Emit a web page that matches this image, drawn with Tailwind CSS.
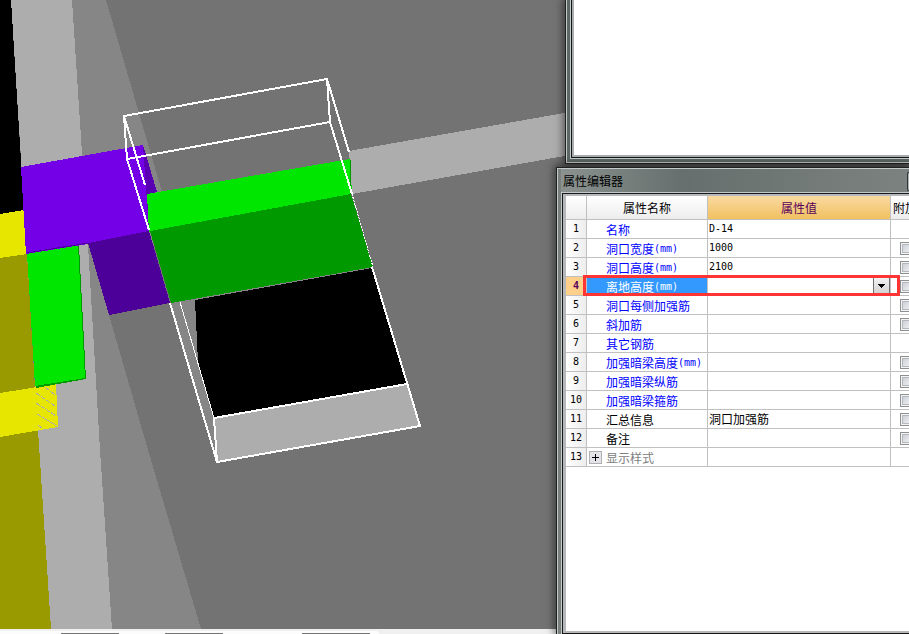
<!DOCTYPE html>
<html lang="zh-CN">
<head>
  <meta charset="UTF-8">
  <title>属性编辑器</title>
  <script src="https://cdn.jsdelivr.net/npm/@tailwindcss/browser@4"></script>
</head>
<body class="relative flex h-screen flex-col overflow-hidden bg-[#737373] font-['Noto_Sans_CJK_SC',sans-serif] text-xs text-black">

  <!-- 3D view -->
  <main class="min-h-0 flex-1">
    <svg class="block h-full w-full" viewBox="0 0 909 629" preserveAspectRatio="xMinYMin slice" shape-rendering="crispEdges" role="img" aria-label="3D">
      <rect width="909" height="629" fill="#737373"/>
      <!-- floor and walls -->
      <polygon points="0,0 11,0 27,258 0,258" fill="#000000"/>
      <polygon points="11,0 72,0 88,245 100,450 112,629 51,629 38,430" fill="#adadad"/>
      <polygon points="72,0 106,0 162,192 157,240 109,315 148,450 201,629 112,629 100,450 88,245" fill="#868686"/>
      <polygon points="349,151 570,112 570,155 352,194" fill="#adadad"/>
      <!-- left beams -->
      <polygon points="0,214 24,210 27,254 0,258" fill="#e6e600"/>
      <polygon points="0,258 27,254 35,388 0,393" fill="#999900"/>
      <polygon points="0,437 38,430 51,629 0,629" fill="#999900"/>
      <polygon points="0,393 56,384 58,427 0,437" fill="#e6e600"/>
      <g stroke="#adadad" stroke-width="1" stroke-dasharray="5 1">
        <path d="M45 387L55 395M36 393L55 406M36 403L56 416M37 414L57 426M38 425L43 429"/>
      </g>
      <polygon points="27,253 79,245 86,379 36,388" fill="#009900"/>
      <polygon points="27,253 78,245 85,378 35,386" fill="#00e600"/>
      <!-- column -->
      <polygon points="143,145 157,192 148,194 149,232 140,200" fill="#5900b3"/>
      <polygon points="21,167 143,145 149,231 88,244 26,254" fill="#7300e6"/>
      <path d="M27 253L88 243" stroke="#4c0099"/>
      <polygon points="88,243 149,231 170,303 109,315" fill="#4c0099"/>
      <!-- beam above the opening -->
      <polygon points="147,194 350,159 352,194 149,232" fill="#00e600"/>
      <path d="M350.500 160V194" stroke="#009900"/>
      <polygon points="150,231 351,194 373,267 171,303" fill="#009900"/>
      <!-- opening -->
      <polygon points="171,303 373,267 214,418 217,462" fill="#868686"/>
      <polygon points="195,300 372,268 407,384 214,418 198,362" fill="#000000"/>
      <polygon points="214,418 407,384 420,426 217,462" fill="#adadad"/>
      <g fill="none" stroke="#ffffff" stroke-width="2">
        <path d="M124 116L327 79L330 122L127 159Z"/>
        <path d="M327 79L349 152M330 122L352 194M124 116L145 185M127 159L149 230"/>
        <path d="M170 303L217 462L420 426L372 267M407 384L214 418L217 462"/>
      </g>
      <path d="M180 302L214 418" stroke="#ffffff"/>
      <path d="M352 194L373 267" stroke="#ffffff" stroke-dasharray="2 1"/>
    </svg>
  </main>

  <!-- bottom tabs -->
  <footer class="h-[5px] shrink-0 bg-[#f0f0f0] pt-0.5">
    <div class="flex h-[3px] w-[379px] items-end rounded-tr bg-[#fcfcfc] pl-[61px]">
      <span class="h-px w-[58px] bg-[#737373]"></span>
      <span class="ml-[46px] h-px w-[58px] bg-[#737373]"></span>
      <span class="ml-[79px] h-px w-[68px] bg-[#737373]"></span>
    </div>
  </footer>

  <!-- upper window -->
  <section class="absolute top-0 right-0 left-[565px] h-[164px] border-b border-l border-[#202020] shadow-[0_0_8px_2px_#00000080]">
    <div class="h-full border-b border-l border-[#c4c9c9] bg-[#5d6764] pb-[3px] pl-[3px]">
      <div class="h-full border-b border-l border-[#c4c9c9]">
        <div class="h-full border-b border-l border-[#181818]">
          <div class="h-full border-b-2 border-l-2 border-[#a9adad] bg-white"></div>
        </div>
      </div>
    </div>
  </section>

  <!-- property editor -->
  <section class="absolute top-[167px] right-0 bottom-0 left-[556px] border-t border-l border-[#202020] shadow-[0_0_8px_2px_#00000080]">
    <div class="flex h-full flex-col border-t border-l border-[#c4c9c9] bg-[#5d6764] bg-linear-to-r from-[#79807e] to-[#737a78] pl-[3px]">
      <header class="flex h-[23px] shrink-0 items-center justify-between bg-linear-to-r from-[#8b9290] via-[#666f6d] via-35% to-[#7c8280] pl-0.5">
        <h1 class="leading-6">属性编辑器</h1>
        <button type="button" aria-label="关闭" class="mt-0.5 h-[19px] w-0.5 rounded-l-sm border-y border-l border-[#303434] bg-[#b0b5b5]"></button>
      </header>
      <div class="min-h-0 flex-1 border-t border-l border-[#c4c9c9]">
        <div class="h-full border-t border-b border-l border-[#181818]">
          <div class="h-full overflow-hidden border-t-2 border-b-2 border-l-3 border-[#b4b8ba] bg-white">
            <table class="w-[364px] table-fixed border-separate border-spacing-0">
              <colgroup>
                <col class="w-[21px]">
                <col class="w-[121px]">
                <col class="w-[183px]">
                <col>
              </colgroup>
              <thead>
                <tr class="h-6 leading-5">
                  <th class="border-r border-b border-[#c0c0c0] bg-linear-to-b from-white to-[#ededed] p-0"></th>
                  <th class="border-r border-b border-[#c0c0c0] bg-linear-to-b from-white to-[#ededed] p-0 font-normal">属性名称</th>
                  <th class="border-r border-b border-[#c0c0c0] bg-linear-to-b from-[#f9d99f] to-[#f1c15f] p-0 font-normal text-[#5a005a]">属性值</th>
                  <th class="border-b border-[#c0c0c0] bg-linear-to-b from-white to-[#ededed] p-0 pl-0.5 text-left font-normal">附加</th>
                </tr>
              </thead>
              <tbody id="rows"></tbody>
            </table>
          </div>
        </div>
      </div>
    </div>
  </section>

  <!-- highlight round the selected row -->
  <div class="pointer-events-none absolute top-[275px] left-[583px] h-[21px] w-[317px] border-3 border-[#ff3434]"></div>

  <script>
    const rows = [
      { name: '名称', value: 'D-14', blue: true },
      { name: '洞口宽度', unit: '(mm)', value: '1000', blue: true, check: true },
      { name: '洞口高度', unit: '(mm)', value: '2100', blue: true, check: true },
      { name: '离地高度', unit: '(mm)', selected: true, check: true },
      { name: '洞口每侧加强筋', blue: true, check: true },
      { name: '斜加筋', blue: true, check: true },
      { name: '其它钢筋', blue: true },
      { name: '加强暗梁高度', unit: '(mm)', blue: true, check: true },
      { name: '加强暗梁纵筋', blue: true, check: true },
      { name: '加强暗梁箍筋', blue: true, check: true },
      { name: '汇总信息', text: '洞口加强筋', check: true },
      { name: '备注', check: true },
      { name: '显示样式', group: true }
    ];

    const select = `
      <div class="relative h-[18px]">
        <select aria-label="离地高度(mm)" class="block h-full w-full appearance-none bg-white"><option></option></select>
        <span class="pointer-events-none absolute top-0 right-0 flex h-full w-[17px] items-center justify-center border-x border-[#707070] bg-linear-to-b from-[#f4f4f4] to-[#cfcfcf]">
          <svg class="h-1 w-[7px]" viewBox="0 0 7 4" shape-rendering="crispEdges"><path d="M0 0H7V1H6V2H5V3H4V4H3V3H2V2H1V1H0Z"/></svg>
        </span>
      </div>`;

    const plus = `
      <button type="button" aria-label="展开" class="flex size-[13px] items-center justify-center border border-[#b0b0b0] bg-[#e4e4e8]">
        <svg class="size-[7px]" viewBox="0 0 7 7" shape-rendering="crispEdges"><path d="M3 0H4V3H7V4H4V7H3V4H0V3H3Z"/></svg>
      </button>`;

    document.getElementById('rows').innerHTML = rows.map((r, i) => {
      const color = r.selected ? 'bg-[#3399ff] text-white' : r.blue ? 'text-[#0000ff]' : r.group ? 'text-[#808080]' : 'text-black';
      const head = r.selected ? 'bg-[#ffd08a] font-bold text-[#5a005a]' : 'bg-linear-to-r from-white to-[#ededed] font-normal';
      const value = r.text || (r.value ? `<span class="block font-['DejaVu_Sans_Mono',monospace] text-[10px] leading-4">${r.value}</span>` : '');
      return `
        <tr class="h-[19px] leading-4">
          <th scope="row" class="border-r border-b border-[#c0c0c0] p-0 font-['DejaVu_Sans_Mono',monospace] text-[10px] ${head}">${i + 1}</th>
          <td class="border-r border-b border-[#c0c0c0] p-0 whitespace-nowrap ${color}">
            <div class="flex h-[18px] items-center">
              <span class="w-[19px] shrink-0 pl-0.5">${r.group ? plus : ''}</span>
              <span class="pt-0.5">${r.name}</span>
              ${r.unit ? `<span class="pt-0.5 font-['DejaVu_Sans_Mono',monospace] text-[10px]">${r.unit}</span>` : ''}
            </div>
          </td>
          <td class="border-r border-b border-[#c0c0c0] p-0 ${r.selected ? '' : 'pl-px'}">${r.selected ? select : value}</td>
          <td class="border-b border-[#c0c0c0] p-0 pl-[9px]">
            ${r.check ? `<input type="checkbox" aria-label="${r.name}" class="block size-[13px] appearance-none border border-[#8e8f8f] bg-linear-to-br from-[#c4cad2] to-[#f6f6f6] shadow-[inset_0_0_0_1px_#f4f4f4,inset_0_0_0_2px_#b4b8be]">` : ''}
          </td>
        </tr>`;
    }).join('');
  </script>
</body>
</html>
